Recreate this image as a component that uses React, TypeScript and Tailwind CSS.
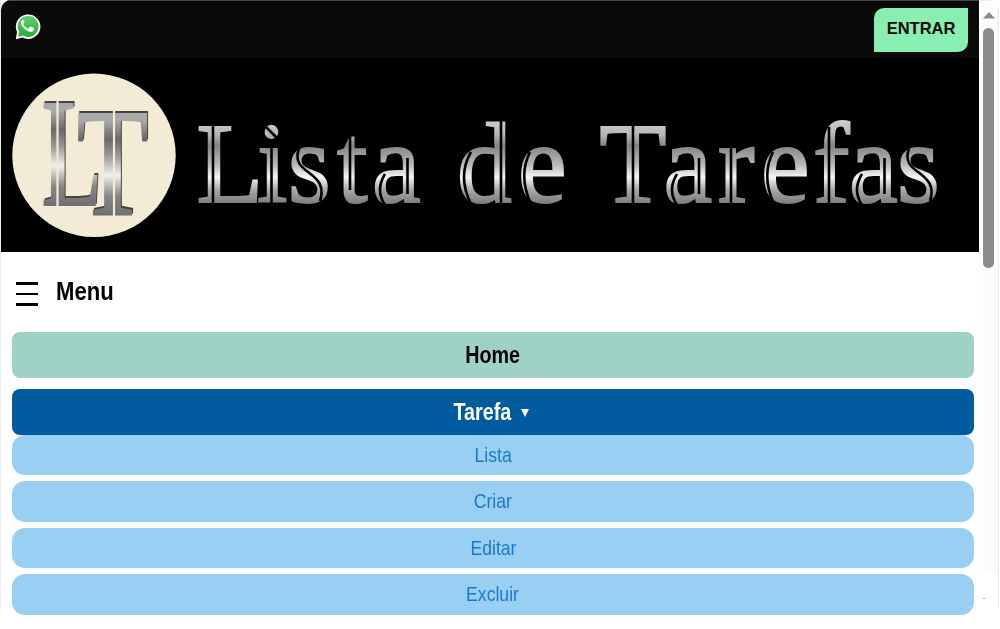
const WORD_LETTERS: { text: string; xs: number[] }[] = [
  { text: "Lista", xs: [196.5, 257, 288, 337, 372] },
  { text: "de", xs: [457, 518] },
  { text: "Tarefas", xs: [599.5, 663.5, 718, 761, 813, 849, 897] },
];

const SQUEEZE = 0.96;

function WhatsAppIcon() {
  return (
    <svg width="27" height="28" viewBox="0 0 27 28" className="block">
      <defs>
        <linearGradient id="wa" x1="0" y1="0" x2="0" y2="1">
          <stop offset="0" stopColor="#5fd269" />
          <stop offset="1" stopColor="#24ad3c" />
        </linearGradient>
      </defs>
      <path d="M1.8 26.2 3 19A12.3 12.3 0 1 1 8.4 24.6Z" fill="#fff" />
      <path d="M4.2 24 5 18.6A10.5 10.5 0 1 1 8.9 22.5Z" fill="url(#wa)" />
      <path d="M9.9 7.4c-.5-.9-1.4-.9-2-.1-1.3 1.5-1.2 3.6.2 5.7 1.8 2.8 4.2 4.9 7.3 5.7 2 .5 4.3-.5 4.7-2.5.1-.8 0-1-.7-1.4l-2.4-1.1c-.5-.2-.9-.1-1.2.3l-1 1.2c-.4.4-.8.3-1.4 0-1.8-.9-3.1-2.2-4-3.8-.3-.5-.1-.8.3-1.2.7-.8.9-1 .6-1.7Z" fill="#fff" />
    </svg>
  );
}

function Banner() {
  return (
    <svg width="978" height="194" viewBox="1 58 978 194" className="block bg-black" fontFamily="Liberation Serif, serif">
      <defs>
        <linearGradient id="metal" gradientUnits="userSpaceOnUse" x1="0" y1="116" x2="0" y2="206">
          <stop offset="0" stopColor="#d4d4d4" />
          <stop offset="0.2" stopColor="#b8b8b8" />
          <stop offset="0.33" stopColor="#848484" />
          <stop offset="0.54" stopColor="#b8b8b8" />
          <stop offset="0.68" stopColor="#f5f5f5" />
          <stop offset="0.82" stopColor="#a8a8a8" />
          <stop offset="1" stopColor="#747474" />
        </linearGradient>
        <linearGradient id="badge" gradientUnits="userSpaceOnUse" x1="0" y1="-106" x2="0" y2="0">
          <stop offset="0" stopColor="#a6a6a6" />
          <stop offset="0.1" stopColor="#aaaaaa" />
          <stop offset="0.28" stopColor="#686868" />
          <stop offset="0.44" stopColor="#9a9a9a" />
          <stop offset="0.62" stopColor="#f0f0f0" />
          <stop offset="0.82" stopColor="#848484" />
          <stop offset="1" stopColor="#707070" />
        </linearGradient>
      </defs>
      <circle cx="94" cy="155.3" r="81.7" fill="#f2ecd7" />
      <g fontSize="157" fontWeight="700" fill="url(#badge)" className="[filter:drop-shadow(1px_-1.3px_0_#45453c)]">
        <text transform="translate(42 206) scale(.565 1)">L</text>
        <text transform="translate(76.5 215.5) scale(.69 1)">T</text>
      </g>
      <g fill="none" stroke="#f2ecd7" strokeWidth="2.2">
        <path d="M57.5 100V207M114 109V217" />
      </g>
      <g
        fontSize="114"
        fill="url(#metal)"
        stroke="url(#metal)"
        strokeWidth="2.2"
        transform={`scale(${SQUEEZE} 1)`}
      >
        {WORD_LETTERS.map(({ text, xs }) => (
          <text key={text} x={xs.map((x) => (x / SQUEEZE).toFixed(1)).join(" ")} y="202.5">
            {text}
          </text>
        ))}
      </g>
      {/* inline engraving through stems and bowls */}
      <g fill="none" stroke="#000" strokeWidth="2.6">
        <path d="M213 125V206M271.5 148V206M263 124L281 142M350 134V190M407.5 158V194" />
        <path d="M501 114V206M633 125V206M699 158V194M731 148V206M829 127V206M884.5 158V194" />
        <path d="M471 152Q457 176 471 204M530 152Q518 176 531 204M773 152Q761 176 774 204" />
        <path d="M385 174Q375 190 385 205M677 174Q667 190 677 205M862 174Q852 190 862 205" />
        <path d="M299 149C289 175 330 170 320 201M909 149C899 175 940 170 930 201" />
      </g>
    </svg>
  );
}

const SUB_ITEMS = ["Lista", "Criar", "Editar", "Excluir"];

export default function App() {
  return (
    <div className="flex h-[629px] w-[1000px] overflow-hidden bg-white font-['Liberation_Sans',Arial,sans-serif]">
      <div className="h-[608px] w-px shrink-0 bg-[#eeeeee]" />
      <main className="w-[978px] shrink-0">
        <header className="overflow-hidden rounded-tl-[10px]">
          <div className="flex h-[58px] items-start justify-between border-t border-[#484848] bg-[#0a0a0a] pl-[13px] pr-[11px]">
            <div className="pt-3">
              <WhatsAppIcon />
            </div>
            <button className="mt-[7px] h-11 w-[94px] rounded-br-[10px] rounded-tl-[10px] bg-[#88efb0] pb-1 text-[16.5px] font-bold text-[#080808]">
              ENTRAR
            </button>
          </div>
          <Banner />
        </header>
        <div className="flex h-20 items-center pl-[15px]">
          <div className="flex w-[22px] flex-col gap-2 pt-1">
            <span className="h-[2.5px] bg-black" />
            <span className="h-[2.5px] bg-black" />
            <span className="h-[2.5px] bg-black" />
          </div>
          <span className="ml-[18px] inline-block origin-left scale-x-[.85] pb-0.5 text-[26px] font-bold leading-none text-black">
            Menu
          </span>
        </div>
        <nav className="ml-[11px] w-[962px] text-center">
          <a className="mb-[11.5px] flex h-[45.5px] items-center justify-center rounded-[8px] bg-[#9fd2c7] pt-0.5 text-[23.5px] font-bold text-black">
            <span className="inline-block scale-x-[.84]">Home</span>
          </a>
          <a className="flex h-[45.5px] items-center justify-center rounded-[8px] bg-[#005b9f] pr-[3px] pt-0.5 text-white">
            <span className="-mx-[6px] inline-block scale-x-[.84] text-[23.5px] font-bold">Tarefa</span>
            <svg width="8" height="8" viewBox="0 0 8 8" className="ml-[10px]">
              <path d="M0 0h8L4 8Z" fill="currentColor" />
            </svg>
          </a>
          <div className="flex flex-col gap-[6px]">
            {SUB_ITEMS.map((item) => (
              <a key={item} className="flex h-[40.6px] items-center justify-center rounded-[13px] bg-[#9acff4] pb-px text-[21px] text-[#1b7ac8]">
                <span className="inline-block scale-x-[.84]">{item}</span>
              </a>
            ))}
          </div>
        </nav>
      </main>
      <aside className="ml-px flex h-[608px] w-[19px] shrink-0 flex-col rounded-tr-[10px] border-r border-t border-[#ececec] pl-[3px]">
        <div className="flex h-[572px] w-[15px] flex-col bg-[#fcfcfc]">
          <svg width="12" height="7" viewBox="0 0 12 7" className="mt-[11px] shrink-0">
            <path d="M6 0 12 6.5H0Z" fill="#8b8b8b" />
          </svg>
          <div className="mt-[9px] h-60 w-[11px] rounded-full bg-[#8b8b8b]" />
        </div>
        <div className="mt-[25px] h-px w-[2px] bg-[#999]" />
      </aside>
    </div>
  );
}
